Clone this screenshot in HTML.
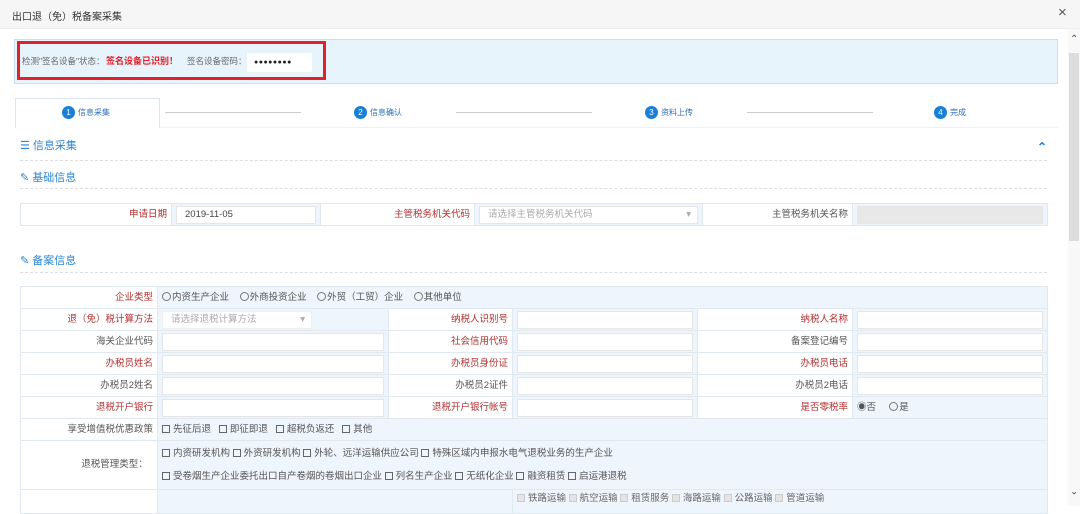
<!DOCTYPE html>
<html><head><meta charset="utf-8"><style>
*{box-sizing:border-box;margin:0;padding:0}
body{width:1080px;height:506px;overflow:hidden;background:#fff;font-family:"Liberation Sans","Noto Sans CJK SC",sans-serif;font-size:10px;color:#555;position:relative}
.a{position:absolute}
.hdr{left:0;top:0;width:1080px;height:29px;background:#f6f6f6;border-bottom:1px solid #eee}
.circ{width:13px;height:13px;border-radius:50%;background:#1a7fd8;color:#fff;font-size:8px;text-align:center;line-height:13px}
.stl{font-size:8px;color:#2a6ebb}
.line{height:1px;background:#ccc}
.sec{color:#2d86d2;font-size:11px}
.dot{border-top:1px dashed #ddd;height:0}
.red{color:#b03030}
table{border-collapse:collapse;position:absolute;left:20px;width:1027px;table-layout:fixed}
td{border:1px solid #e0e8f0;height:22px;padding:0 4px;font-size:9.5px;white-space:nowrap;overflow:hidden;line-height:12px}
td.l{text-align:right;background:#fff}
td.v{background:#eef5fc;padding:1px 4px}
.in{background:#fff;border:1px solid #e6e6e6;height:18px;width:100%;line-height:16px;padding-left:8px}
.cb{display:inline-block;width:8px;height:8px;border:1px solid #666;margin-right:3px;vertical-align:-1px}
.cbg{display:inline-block;width:8px;height:8px;border:1px solid #ccc;background:#e4e4e4;margin-right:3px;vertical-align:-1px}
.rd{display:inline-block;width:9px;height:9px;border:1px solid #777;border-radius:50%;vertical-align:-1px;margin-right:1px}
</style></head><body>
<div class="a hdr"></div>
<div class="a" style="left:12px;top:8px;font-size:10px;color:#333">出口退（免）税备案采集</div>
<div class="a" style="left:1058px;top:4px;font-size:15px;color:#555">×</div>
<div class="a" style="left:1068px;top:29px;width:12px;height:477px;background:#f8f8f8"></div>
<div class="a" style="left:1069px;top:53px;width:10px;height:188px;background:#ddd"></div>
<div class="a" style="left:1070px;top:34px;font-size:10px;color:#555">&#8963;</div>
<div class="a" style="left:1070px;top:484px;font-size:10px;color:#555;transform:rotate(180deg)">&#8963;</div>

<div class="a" style="left:14px;top:39px;width:1044px;height:45px;background:#e8f4fb;border:1px solid #c9e1f2"></div>
<div class="a" style="left:17px;top:41px;width:309px;height:39px;border:3px solid #e0202a"></div>
<div class="a" style="left:22px;top:55px;font-size:8.5px;color:#666">检测"签名设备"状态：</div>
<div class="a" style="left:106px;top:54px;font-size:9px;color:#e0202a;font-weight:bold">签名设备已识别！</div>
<div class="a" style="left:187px;top:55px;font-size:8.5px;color:#666">签名设备密码：</div>
<div class="a" style="left:247px;top:53px;width:65px;height:19px;background:#fff;font-size:7px;line-height:19px;padding-left:7px;color:#222;letter-spacing:0.5px">●●●●●●●●</div>

<div class="a" style="left:15px;top:98px;width:145px;height:30px;border:1px solid #dde5ee;border-bottom:none;background:#fff"></div>
<div class="a" style="left:160px;top:127px;width:898px;height:1px;background:#eef0f3"></div>
<div class="a circ" style="left:62px;top:106px">1</div><div class="a stl" style="left:78px;top:107px">信息采集</div>
<div class="a line" style="left:165px;top:112px;width:136px"></div>
<div class="a circ" style="left:354px;top:106px">2</div><div class="a stl" style="left:370px;top:107px">信息确认</div>
<div class="a line" style="left:456px;top:112px;width:136px"></div>
<div class="a circ" style="left:645px;top:106px">3</div><div class="a stl" style="left:661px;top:107px">资料上传</div>
<div class="a line" style="left:747px;top:112px;width:126px"></div>
<div class="a circ" style="left:934px;top:106px">4</div><div class="a stl" style="left:950px;top:107px">完成</div>

<div class="a sec" style="left:20px;top:137px">☰ 信息采集</div>
<div class="a" style="left:1037px;top:140px;font-size:12px;color:#1a7fd8;font-weight:bold">&#8963;</div>
<div class="a dot" style="left:20px;top:160px;width:1027px"></div>
<div class="a sec" style="left:20px;top:169px">&#9998; 基础信息</div>
<div class="a dot" style="left:20px;top:188px;width:1027px"></div>

<table style="top:203px">
<colgroup><col style="width:151px"><col style="width:149px"><col style="width:154px"><col style="width:228px"><col style="width:150px"><col style="width:195px"></colgroup>
<tr><td class="l red">申请日期</td><td class="v"><div class="in" style="color:#444">2019-11-05</div></td><td class="l red">主管税务机关代码</td><td class="v"><div class="in" style="color:#aaa">请选择主管税务机关代码<span style="float:right;margin-right:6px">▾</span></div></td><td class="l" style="color:#555">主管税务机关名称</td><td class="v"><div class="in" style="background:#e8e8e8"></div></td></tr>
</table>

<div class="a sec" style="left:20px;top:252px">&#9998; 备案信息</div>
<div class="a dot" style="left:20px;top:272px;width:1027px"></div>

<table style="top:286px">
<colgroup><col style="width:137px"><col style="width:231px"><col style="width:124px"><col style="width:185px"><col style="width:155px"><col style="width:195px"></colgroup>
<tr><td class="l red">企业类型</td><td class="v" colspan="5" style="color:#555"><span class="rd"></span>内资生产企业 &nbsp;&nbsp;&nbsp;<span class="rd"></span>外商投资企业 &nbsp;&nbsp;&nbsp;<span class="rd"></span>外贸（工贸）企业 &nbsp;&nbsp;&nbsp;<span class="rd"></span>其他单位</td></tr>
<tr><td class="l red">退（免）税计算方法</td><td class="v"><div class="in" style="width:150px;color:#aaa;border-color:#f0f0f0">请选择退税计算方法<span style="float:right;margin-right:6px">▾</span></div></td><td class="l red">纳税人识别号</td><td class="v"><div class="in"></div></td><td class="l red">纳税人名称</td><td class="v"><div class="in"></div></td></tr>
<tr><td class="l">海关企业代码</td><td class="v"><div class="in"></div></td><td class="l red">社会信用代码</td><td class="v"><div class="in"></div></td><td class="l">备案登记编号</td><td class="v"><div class="in"></div></td></tr>
<tr><td class="l red">办税员姓名</td><td class="v"><div class="in"></div></td><td class="l red">办税员身份证</td><td class="v"><div class="in"></div></td><td class="l red">办税员电话</td><td class="v"><div class="in"></div></td></tr>
<tr><td class="l">办税员2姓名</td><td class="v"><div class="in"></div></td><td class="l">办税员2证件</td><td class="v"><div class="in"></div></td><td class="l">办税员2电话</td><td class="v"><div class="in"></div></td></tr>
<tr><td class="l red">退税开户银行</td><td class="v"><div class="in"></div></td><td class="l red">退税开户银行帐号</td><td class="v"><div class="in"></div></td><td class="l red">是否零税率</td><td class="v">◉否 &nbsp;&nbsp;&nbsp;&nbsp;<span class="rd"></span>是</td></tr>
<tr><td class="l" style="height:17px">享受增值税优惠政策</td><td class="v" colspan="5"><span class="cb"></span>先征后退 &nbsp;&nbsp;<span class="cb"></span>即征即退 &nbsp;&nbsp;<span class="cb"></span>超税负返还 &nbsp;&nbsp;<span class="cb"></span>其他</td></tr>
<tr><td class="l" style="height:49px">退税管理类型：&nbsp;&nbsp;</td><td class="v" colspan="5" style="line-height:23px"><span class="cb"></span>内资研发机构 <span class="cb"></span>外资研发机构 <span class="cb"></span>外轮、远洋运输供应公司 <span class="cb"></span>特殊区域内申报水电气退税业务的生产企业<br><span class="cb"></span>受卷烟生产企业委托出口自产卷烟的卷烟出口企业 <span class="cb"></span>列名生产企业 <span class="cb"></span>无纸化企业 <span class="cb"></span>融资租赁 <span class="cb"></span>启运港退税</td></tr>
<tr><td class="l" style="height:24px"></td><td class="v" colspan="2"></td><td class="v" colspan="3" style="color:#666;vertical-align:top;padding-top:3px"><span class="cbg"></span>铁路运输 <span class="cbg"></span>航空运输 <span class="cbg"></span>租赁服务 <span class="cbg"></span>海路运输 <span class="cbg"></span>公路运输 <span class="cbg"></span>管道运输</td></tr>
</table>
</body></html>
